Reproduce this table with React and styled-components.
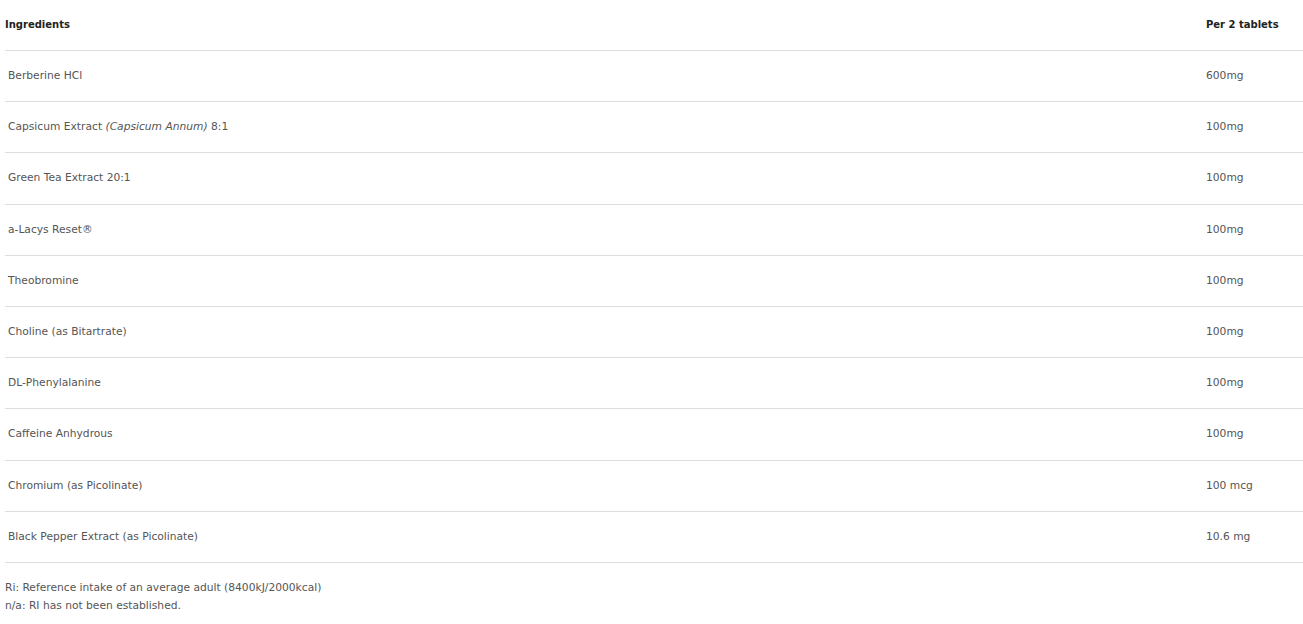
import styled, { createGlobalStyle } from "styled-components";

const GlobalStyle = createGlobalStyle`
  body {
    margin: 0;
    background: #ffffff;
    font-family: "DejaVu Sans", "Noto Sans", sans-serif;
  }
`;

const rows = [
  { name: "Berberine HCl", amount: "600mg" },
  {
    name: (
      <>
        Capsicum Extract <em>(Capsicum Annum)</em> 8:1
      </>
    ),
    amount: "100mg",
  },
  { name: "Green Tea Extract 20:1", amount: "100mg" },
  { name: "a-Lacys Reset®", amount: "100mg" },
  { name: "Theobromine", amount: "100mg" },
  { name: "Choline (as Bitartrate)", amount: "100mg" },
  { name: "DL-Phenylalanine", amount: "100mg" },
  { name: "Caffeine Anhydrous", amount: "100mg" },
  { name: "Chromium (as Picolinate)", amount: "100 mcg" },
  { name: "Black Pepper Extract (as Picolinate)", amount: "10.6 mg" },
];

function App() {
  return (
    <>
      <GlobalStyle />
      <Wrapper>
        <HeadRow>
          <HeadCell>Ingredients</HeadCell>
          <HeadCell>Per 2 tablets</HeadCell>
        </HeadRow>
        {rows.map((row, i) => (
          <Row key={i}>
            <NameCell>{row.name}</NameCell>
            <AmountCell>{row.amount}</AmountCell>
          </Row>
        ))}
        <Notes>
          <p>Ri: Reference intake of an average adult (8400kJ/2000kcal)</p>
          <p>n/a: RI has not been established.</p>
        </Notes>
      </Wrapper>
    </>
  );
}

export default App;

const Wrapper = styled.div`
  padding-left: 5px;
`;

const HeadRow = styled.div`
  display: grid;
  grid-template-columns: 1201px 1fr;
  align-items: center;
  height: 51px;
  box-sizing: border-box;
  border-bottom: 1px solid #dedede;
`;

const HeadCell = styled.div`
  font-size: 10px;
  font-weight: 700;
  color: #222;
  padding-bottom: 1px;
`;

const Row = styled.div`
  display: grid;
  grid-template-columns: 1201px 1fr;
  align-items: center;
  height: 51.2px;
  box-sizing: border-box;
  border-bottom: 1px solid #dedede;
  font-size: 10.7px;
  color: #555;
`;

const NameCell = styled.div`
  padding-left: 3px;
  padding-bottom: 1px;
`;

const AmountCell = styled.div`
  padding-bottom: 1px;
`;

const Notes = styled.div`
  margin-top: 16px;
  font-size: 10.7px;
  color: #555;

  p {
    margin: 0;
    line-height: 18px;
  }
`;
